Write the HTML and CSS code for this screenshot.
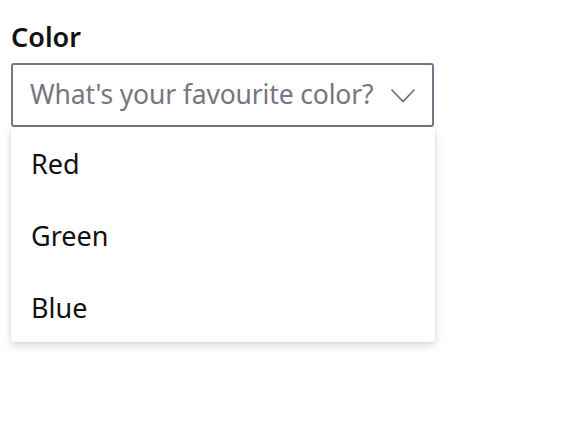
FILE: index.html
```html
<!DOCTYPE html>
<html>
<head>
<meta charset="utf-8">
<link rel="stylesheet" href="styles.css">
</head>
<body>
<div class="field">
  <div class="label">Color</div>
  <div class="trigger">
    <span class="placeholder">What's your favourite color?</span>
    <svg class="chevron" width="26" height="16" viewBox="0 0 26 16"><path d="M1.5 1.5 L13 13.5 L24.5 1.5" fill="none" stroke="#6b6b7e" stroke-width="1.6"/></svg>
  </div>
  <div class="listbox">
    <div class="option">Red</div>
    <div class="option">Green</div>
    <div class="option">Blue</div>
  </div>
</div>
</body>
</html>
```
FILE: styles.css
```css
html, body { margin: 0; padding: 0; background: #fff; }
body { font-family: "Noto Sans", "Open Sans", sans-serif; color: #111; min-height: 100vh; }
.field { padding: 19px 0 60px 11px; width: 424px; display: flex; flex-direction: column; }
.label { font-size: 27px; font-weight: 600; line-height: 36px; height: 44px; color: #111; }
.trigger {
  box-sizing: border-box; width: 423px; height: 64px;
  display: flex; align-items: center; justify-content: space-between;
  padding: 0 16px 2px 17px; background: #fff;
  border: 2px solid #77778b; border-radius: 3px;
}
.placeholder { font-size: 26.5px; color: #757583; letter-spacing: -0.15px; }
.chevron { display: block; margin-top: 4px; }
.listbox {
  width: 424px; box-sizing: border-box; height: 215px;
  padding: 0; background: #fff; border-radius: 4px;
  box-shadow: 0 4px 10px rgba(0,0,0,0.14), 0 0 3px rgba(0,0,0,0.10);
}
.option { height: 72px; display: flex; align-items: center; padding: 0 0 0 20px; font-size: 27px; color: #111; }
```
